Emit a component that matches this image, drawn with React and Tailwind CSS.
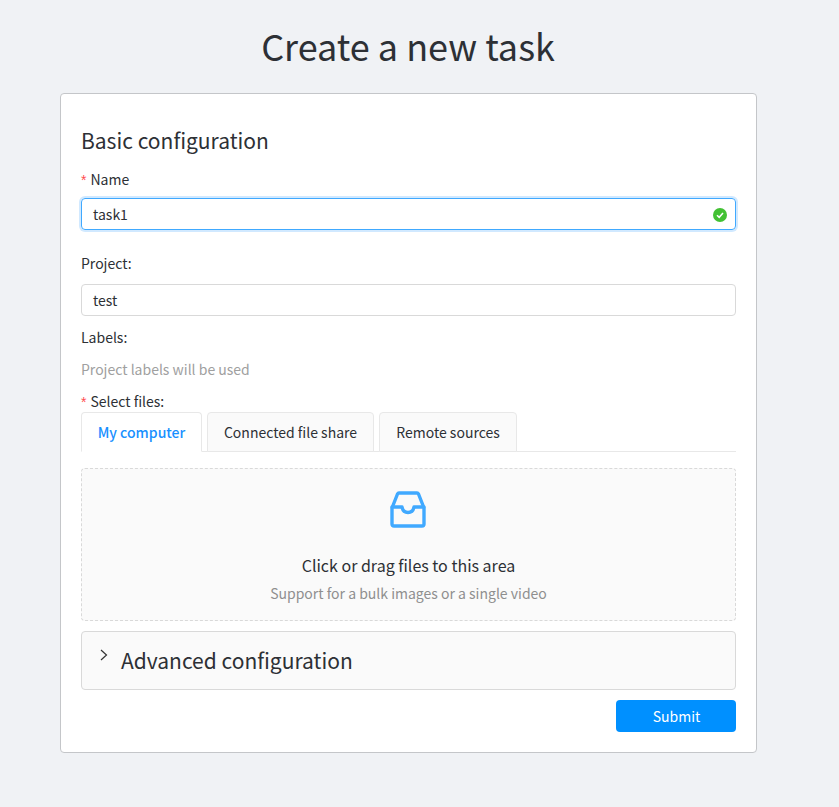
import React from "react";

function Inbox() {
  return (
    <svg className="-translate-x-[0.5px]" width="38" height="38" viewBox="0 0 38 38" fill="none" stroke="#40a9ff" strokeWidth="3.4" strokeLinejoin="round" strokeLinecap="round">
      <path d="M2.5 18 L8 4 Q8.5 3 9.5 3 L27.5 3 Q28.5 3 29 4 L34.5 18 L34.5 34 Q34.5 36 32.5 36 L4.5 36 Q2.5 36 2.5 34 Z" />
      <path d="M2.5 17 L12.5 17 Q13.5 22.5 18.5 22.5 Q23.5 22.5 24.5 17 L34.5 17" />
    </svg>
  );
}

function Req() {
  return <span className="text-[#ff4d4f] text-[14px] mr-[4px] font-['Liberation_Sans',sans-serif]">*</span>;
}

export default function App() {
  return (
    <div className="min-h-[807px] bg-[#f0f2f5] pt-[22px] font-['Noto_Sans_CJK_SC','Noto_Sans',sans-serif] text-[#2d3035]">
      <h1 className="w-[696px] ml-[60px] text-center text-[36px] leading-[46px] h-[45px] font-normal">Create a new task</h1>
      <div className="ml-[60px] w-[697px] h-[660px] mt-[26px] bg-white border border-[#c4c6c9] rounded-[4px] px-[20px] pt-[30px]">
        <h2 className="text-[21px] leading-[32px] font-normal">Basic configuration</h2>
        <div className="mt-[12px] text-[14px] leading-[22px] h-[22px]"><Req />Name</div>
        <div className="mt-[8px] h-[32px] relative flex items-center border border-[#40a9ff] rounded-[4px] px-[11px] text-[14px] shadow-[0_0_0_2px_rgba(24,144,255,0.2)]">
          task1
          <svg className="absolute right-[8px] top-[9px]" width="14" height="14" viewBox="0 0 14 14">
            <circle cx="7" cy="7" r="7" fill="#42c133" />
            <path d="M4 7.2 L6.2 9.3 L10 5" stroke="#fff" strokeWidth="1.5" fill="none" />
          </svg>
        </div>
        <div className="mt-[22px] text-[14px] leading-[22px] h-[22px]">Project:</div>
        <div className="mt-[10px] h-[32px] flex items-center border border-[#d9d9d9] rounded-[4px] px-[11px] text-[14px]">test</div>
        <div className="mt-[10px] text-[14px] leading-[22px] h-[22px]">Labels:</div>
        <div className="mt-[10px] text-[14px] leading-[22px] h-[22px] text-[#a0a0a0]">Project labels will be used</div>
        <div className="mt-[10px] text-[14px] leading-[22px] h-[22px]"><Req />Select files:</div>
        <div className="flex h-[40px] border-b border-[#e8e8e8] gap-[5px]">
          <div className="h-[40px] w-[121px] flex items-center justify-center bg-white border border-[#e8e8e8] border-b-white rounded-t-[4px] text-[#1890ff] text-[14px] font-medium">My computer</div>
          <div className="h-[40px] w-[167px] flex items-center justify-center bg-[#fafafa] border border-[#e8e8e8] border-b-[#e8e8e8] rounded-t-[4px] text-[14px]">Connected file share</div>
          <div className="h-[40px] w-[138px] flex items-center justify-center bg-[#fafafa] border border-[#e8e8e8] border-b-[#e8e8e8] rounded-t-[4px] text-[14px]">Remote sources</div>
        </div>
        <div className="mt-[16px] h-[153px] bg-[#fafafa] border border-dashed border-[#d9d9d9] rounded-[4px] flex flex-col items-center pt-[21px]">
          <Inbox />
          <div className="mt-[25px] text-[16px] leading-[24px]">Click or drag files to this area</div>
          <div className="mt-[5px] text-[14px] leading-[22px] text-[#8f8f8f]">Support for a bulk images or a single video</div>
        </div>
        <div className="mt-[10px] h-[59px] bg-[#fafafa] border border-[#d9d9d9] rounded-[4px] flex items-center pl-[39px] pb-[2px] relative">
          <svg className="absolute left-[17px] top-[17px]" width="10" height="12" viewBox="0 0 10 12" fill="none" stroke="#333" strokeWidth="1.2">
            <path d="M2 1 L7.5 6 L2 11" />
          </svg>
          <span className="text-[21px] leading-[32px]">Advanced configuration</span>
        </div>
        <div className="mt-[10px] flex justify-end">
          <button className="w-[120px] h-[32px] pl-[1px] bg-[#0090ff] text-white rounded-[4px] text-[14px]">Submit</button>
        </div>
      </div>
    </div>
  );
}
